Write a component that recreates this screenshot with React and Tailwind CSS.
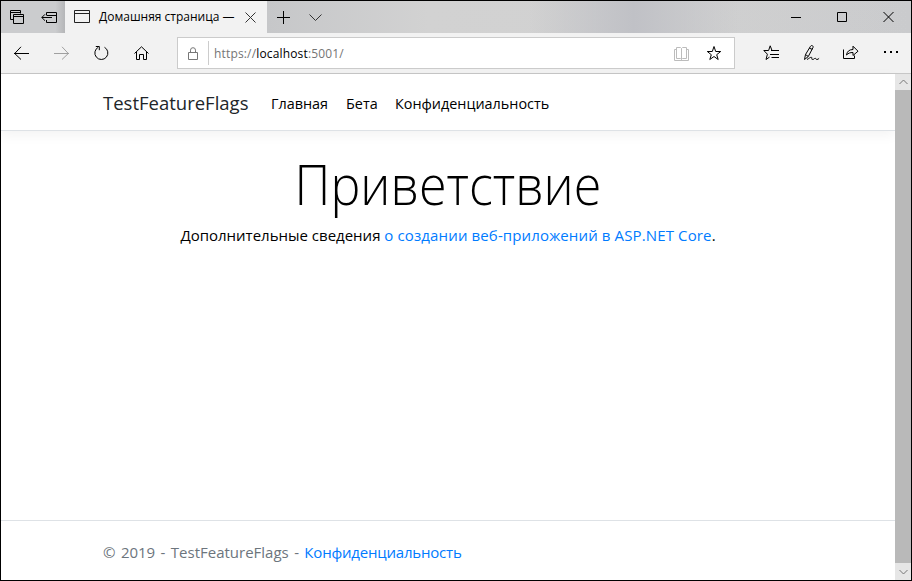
import React from "react";

function Icon({ w, h, className = "", children, sw = 1 }) {
  return (
    <svg width={w} height={h} viewBox={`0 0 ${w} ${h}`} fill="none" stroke="currentColor" strokeWidth={sw} className={`block shrink-0 ${className}`}>
      {children}
    </svg>
  );
}

function TitleBar() {
  return (
    <div className="flex h-8 shrink-0 bg-linear-to-r from-[#c9cacc] via-[#d1d1d1] via-55% to-[#cacbcd]">
      <div className="flex w-16 items-start bg-linear-to-r from-[#cbccce] from-85% to-[#b5b6b8] pt-[9px] pl-[9px] text-black">
        <Icon w={15} h={15}>
          <path d="M3.5 9.5h-3v-9h10v3M.5 2.5h10M3.5 4.5h10v9h-10zM3.5 6.5h10" />
        </Icon>
        <Icon w={17} h={13} className="mt-[1px] ml-4">
          <path d="M5.5 4V1.500h10v10h-10V9M5.500 4.500h10M.8 6.500H11M4 3.300.800 6.500 4 9.700" />
        </Icon>
      </div>
      <div className="flex w-[202px] items-start bg-[#f2f2f2] pt-[9px] pl-[9px] text-black">
        <Icon w={16} h={14} className="text-[#222]">
          <path d="M.5.500h15v12H.500zM.500 3.500h15" />
        </Icon>
        <span className="-mt-[2px] ml-[9px] w-[136px] text-[12px] leading-[18px] whitespace-nowrap">Домашняя страница —</span>
        <Icon w={11} h={11} className="mt-[2px] ml-[10px] text-[#333]">
          <path d="M.500.500l10 10M10.500.500l-10 10" />
        </Icon>
      </div>
      <div className="flex flex-1 bg-linear-to-r from-[#c6c7c9] via-[#d2d2d2] via-25% to-transparent">
        <div className="flex flex-1 items-start bg-linear-to-r from-transparent from-50% via-[#c0c1c6] via-70% to-transparent to-90% pt-[10px] pl-[10px]">
          <Icon w={13} h={13}>
            <path d="M6.500 0v13M0 6.500h13" />
          </Icon>
          <Icon w={13} h={8} className="mt-[3px] ml-[19px] text-[#333]">
            <path d="M.500.500l6 6 6-6" />
          </Icon>
        </div>
        <div className="flex w-[120px] items-start pt-[11px] text-black">
          <Icon w={10} h={10}><path d="M0 5.500h10" /></Icon>
          <Icon w={10} h={10} className="ml-9"><path d="M.500.500h9v9h-9z" /></Icon>
          <Icon w={11} h={10} className="ml-9"><path d="M.500 0l10 10M10.500 0l-10 10" /></Icon>
        </div>
      </div>
    </div>
  );
}

function Toolbar() {
  return (
    <div className="flex h-[41px] shrink-0 items-start border-b border-[#c7c7c7] bg-[#f2f2f2] pl-[13px] text-black">
      <Icon w={15} h={14} className="mt-[13px]"><path d="M0 7.500h15M7 .800.700 7.500 7 13.500" /></Icon>
      <Icon w={15} h={14} className="mt-[13px] ml-[25px] text-[#a0a0a0]"><path d="M0 7.500h15M8 .800l6.300 6.700L8 13.500" /></Icon>
      <Icon w={15} h={16} className="mt-[12px] ml-[25px]">
        <path d="M10.500 2.300A6.500 6.500 0 1 1 4.200 2.300M1.800 1.500h3.500v3.700" />
      </Icon>
      <Icon w={15} h={14} className="mt-[13px] ml-[25px]">
        <path d="M.500 7.500 7.500.800l7 6.700M2.500 6v7.500h3v-5h4v5h3V6" />
      </Icon>
      <div className="mt-1 ml-[28px] flex h-8 w-[558px] items-start border border-[#cbcbcb] bg-white">
        <Icon w={11} h={13} className="mt-[9px] ml-[10px] text-[#777]">
          <path d="M.500 5.500h9v7h-9zM2.500 5.500V3.200a2.500 2.500 0 0 1 5 0v2.300" />
        </Icon>
        <div className="mt-[3px] ml-[9px] h-6 w-px bg-[#ccc]" />
        <span className="mt-[7px] ml-[5px] w-[460px] text-[12px] leading-[18px] tracking-[0.160px] text-[#757575]">
          https://<span className="text-black">localhost</span>:5001/
        </span>
        <Icon w={15} h={14} className="mt-[9px] text-[#bcbcbc]">
          <path d="M2.500.500h4l1 1 1-1h4v11h-4l-1 1-1-1h-4zM7.500 1.500v11M2.500 2.500h-2v11h14v-11h-2" />
        </Icon>
        <Icon w={16} h={16} className="mt-[7px] ml-[17px]">
          <path d="M8 1.500 9.700 6.500h5L10.700 9.700 12.200 14.500 8 11.500 3.800 14.500 5.300 9.700 1.300 6.500h5z" />
        </Icon>
      </div>
      <Icon w={16} h={16} className="mt-[12px] ml-[28px]">
        <path d="M9 5.500 7.200.800 5.600 5.500H.800l3.600 3.700L3 14.500l3.500-2.400M8 5.500h8M7 9.500h9M8.500 12.500H16" />
      </Icon>
      <Icon w={17} h={17} className="mt-[11px] ml-[24px]">
        <path d="M1.500 15.500 2.500 10.500 7.500 2.300C8.500.700 10.700 1.800 10 3.500L5.300 12.500 1.500 15.500M2.500 10.500 5.300 12.500M6.300 4.200 9.300 5.300M4 15.500c2-1 3.500-2.500 4.500-2.200s-.500 2.200 1 2.200 1.700-1.200 2.700-1.200.5 1.200 1.700 1.200 1.300-.500 2.200-1.200" />
      </Icon>
      <Icon w={16} h={15} className="mt-[12px] ml-[23px]">
        <path d="M.500 4.500v9h11v-3M3.500 10c.500-3.300 2.500-5.500 6.500-5.500v-3.300l5 5-5 4.300V7.500c-3 0-4.500.500-6.500 2.500z" />
      </Icon>
      <Icon w={15} h={3} className="mt-[18px] ml-[25px]">
        <g fill="currentColor" stroke="none"><path d="M0 0h2v2H0zM6 0h2v2H6zM12 0h2v2h-2z" /></g>
      </Icon>
    </div>
  );
}

function Page() {
  return (
    <div className="flex flex-1 flex-col bg-white text-[15px] text-black">
      <header className="flex h-[57px] shrink-0 items-start border-b border-[#dee2e6] pl-[102px] shadow-[0_4px_12px_rgba(0,0,0,0.05)]">
        <span className="mt-[14px] w-[168px] text-[18.500px] leading-[30px] whitespace-nowrap text-[#212529]">TestFeatureFlags</span>
        <nav className="mt-[18px] flex text-[14.400px] leading-6 whitespace-nowrap">
          <a className="w-[75px]">Главная</a>
          <a className="w-[49px]">Бета</a>
          <a>Конфиденциальность</a>
        </nav>
      </header>
      <main className="flex flex-1 flex-col items-center">
        <h1 className="mt-[17px] scale-x-[0.913] text-[55px] leading-[72px] font-light whitespace-nowrap">Приветствие</h1>
        <p className="mt-[3px] text-[15px] leading-6 whitespace-nowrap">
          Дополнительные сведения <a className="tracking-[0.130px] text-[#007bff]">о создании веб-приложений в ASP.NET Core</a>.
        </p>
      </main>
      <footer className="flex h-[60px] shrink-0 items-start border-t border-[#dee2e6] pt-[19px] pl-[102px] leading-6 text-[#6c757d]">
        <span className="whitespace-pre"><span className="[word-spacing:1.500px]">© 2019 - TestFeatureFlags - </span><a className="tracking-[-0.200px] text-[#007bff]">Конфиденциальность</a></span>
      </footer>
    </div>
  );
}

export default function App() {
  return (
    <div className="flex h-[581px] w-[912px] flex-col overflow-hidden border border-black font-['Open_Sans','Noto_Sans',sans-serif]">
      <TitleBar />
      <Toolbar />
      <div className="flex min-h-0 flex-1">
        <Page />
        <div className="flex w-4 shrink-0 flex-col bg-[#b9b9b9] text-[#777]">
          <div className="flex h-4 items-center justify-center bg-[#e6e6e6]">
            <Icon w={9} h={6}><path d="M.500 5l4-4 4 4" /></Icon>
          </div>
          <div className="flex-1" />
          <div className="flex h-[17px] items-center justify-center bg-[#e6e6e6]">
            <Icon w={9} h={6}><path d="M.500 1l4 4 4-4" /></Icon>
          </div>
        </div>
      </div>
    </div>
  );
}
